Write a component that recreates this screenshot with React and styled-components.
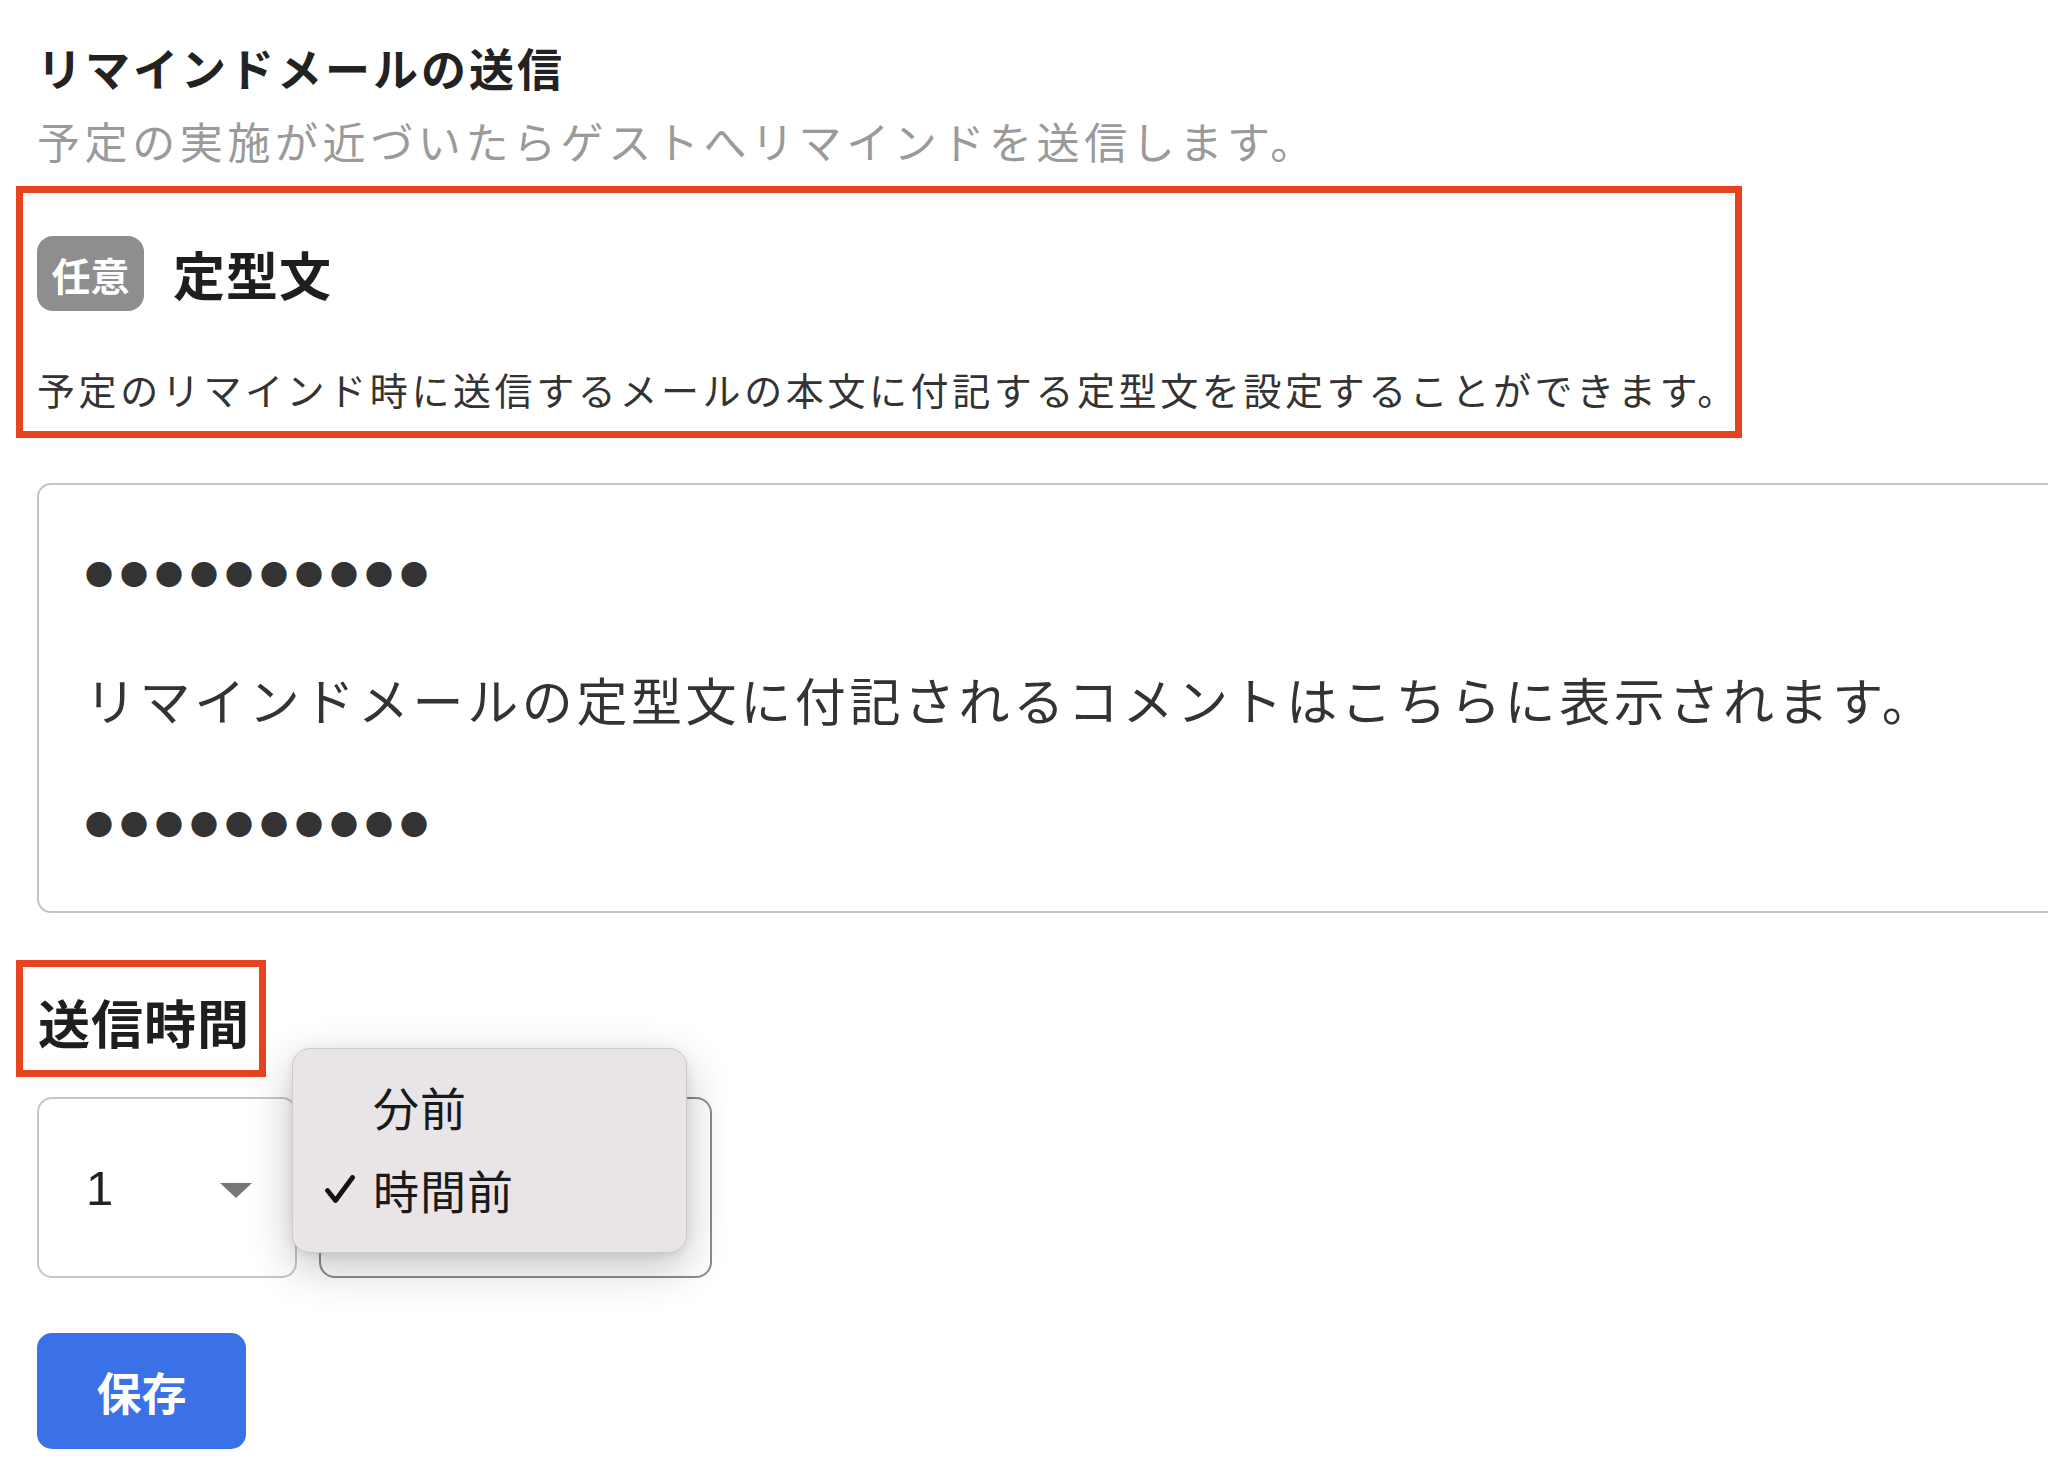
import styled, { createGlobalStyle } from "styled-components";

const GlobalStyle = createGlobalStyle`
  body {
    margin: 0;
    background: #fff;
    overflow: hidden;
    font-family: "Noto Sans CJK JP", "Noto Sans", sans-serif;
    color: #222;
  }
`;

const App = () => {
  return (
    <>
      <GlobalStyle />
      <Page>
        <Title>リマインドメールの送信</Title>
        <Lead>予定の実施が近づいたらゲストへリマインドを送信します。</Lead>

        <Highlight $pad="43px 14px 17px" $width="1726px">
          <FieldHead>
            <Badge>任意</Badge>
            <FieldName>定型文</FieldName>
          </FieldHead>
          <Help>
            予定のリマインド時に送信するメールの本文に付記する定型文を設定することができます。
          </Help>
        </Highlight>

        <Preview>
          <DotLine>●●●●●●●●●●</DotLine>
          <PreviewLine>
            リマインドメールの定型文に付記されるコメントはこちらに表示されます。
          </PreviewLine>
          <DotLine>●●●●●●●●●●</DotLine>
        </Preview>

        <Highlight $pad="12px 9px 5px 15px" $width="fit-content" $gap="47px">
          <SectionLabel>送信時間</SectionLabel>
        </Highlight>

        <SelectRow>
          <Select $width="260px">
            <Value>1</Value>
            <Caret viewBox="0 0 32 15">
              <polygon points="0,0 32,0 16,15" fill="#777" />
            </Caret>
          </Select>
          <Select $width="393px" $dark />

          <Menu>
            <MenuItem>
              <CheckCell />
              分前
            </MenuItem>
            <MenuItem>
              <CheckCell>
                <svg width="30" height="28" viewBox="0 0 30 28">
                  <path
                    d="M2.5 15.5 L10.5 25.5 L27.5 2.5"
                    fill="none"
                    stroke="#111"
                    strokeWidth="4.8"
                    strokeLinecap="round"
                    strokeLinejoin="round"
                  />
                </svg>
              </CheckCell>
              時間前
            </MenuItem>
          </Menu>
        </SelectRow>

        <SaveButton>保存</SaveButton>
      </Page>
    </>
  );
};

const Page = styled.main`
  padding: 38px 0 0 37px;
`;

const Title = styled.h1`
  margin: 0;
  font-size: 45px;
  line-height: 60px;
  font-weight: 700;
  letter-spacing: 3px;
  color: #222;
`;

const Lead = styled.p`
  margin: 12px 0 0;
  font-size: 43px;
  line-height: 60px;
  font-weight: 400;
  letter-spacing: 4.6px;
  color: #9a9a9a;
`;

const Highlight = styled.div`
  box-sizing: border-box;
  width: ${(p) => p.$width};
  margin: ${(p) => p.$gap || "16px"} 0 0 -21px;
  padding: ${(p) => p.$pad};
  border: 7px solid #e8421f;
`;

const FieldHead = styled.div`
  display: flex;
  align-items: center;
  gap: 29px;
  height: 75px;
`;

const Badge = styled.span`
  display: flex;
  align-items: center;
  justify-content: center;
  width: 107px;
  height: 75px;
  border-radius: 16px;
  background: #8e8e8e;
  color: #fff;
  font-size: 39px;
  font-weight: 700;
  letter-spacing: 0;
`;

const FieldName = styled.h2`
  margin: 0;
  font-size: 52px;
  line-height: 75px;
  font-weight: 700;
  letter-spacing: 1px;
  color: #1e1e1e;
`;

const Help = styled.p`
  margin: 53px 0 0;
  font-size: 38px;
  line-height: 50px;
  letter-spacing: 3.6px;
  color: #333;
  white-space: nowrap;
`;

const Preview = styled.div`
  box-sizing: border-box;
  width: 2100px;
  height: 430px;
  margin-top: 45px;
  padding: 26px 0 0 46px;
  border: 2px solid #c4c4c4;
  border-radius: 14px;
  color: #333;
`;

const PreviewLine = styled.div`
  height: 125px;
  display: flex;
  align-items: center;
  font-size: 51px;
  letter-spacing: 3.6px;
  white-space: nowrap;
`;

const DotLine = styled(PreviewLine)`
  font-size: 28px;
  letter-spacing: 7px;
`;

const SectionLabel = styled.h3`
  margin: 0;
  font-size: 52px;
  line-height: 86px;
  font-weight: 700;
  letter-spacing: 1px;
  color: #1e1e1e;
`;

const SelectRow = styled.div`
  position: relative;
  display: flex;
  gap: 22px;
  margin-top: 20px;
  height: 181px;
`;

const Select = styled.div`
  box-sizing: border-box;
  display: flex;
  align-items: center;
  width: ${(p) => p.$width};
  height: 100%;
  padding: 0 43px 0 47px;
  border: 2px solid ${(p) => (p.$dark ? "#8c8c8c" : "#c6c6c6")};
  border-radius: ${(p) => (p.$dark ? "16px" : "15px")};
  background: #fff;
`;

const Value = styled.span`
  font-family: "Liberation Sans", Arial, sans-serif;
  font-size: 49px;
  color: #222;
`;

const Caret = styled.svg`
  width: 32px;
  height: 15px;
  margin: 5px 0 0 auto;
`;

const Menu = styled.ul`
  position: absolute;
  left: 255px;
  top: -49px;
  box-sizing: border-box;
  width: 395px;
  height: 205px;
  margin: 0;
  padding: 15px 0 0;
  list-style: none;
  background: #e8e4e7;
  border: 1px solid #cdc9cc;
  border-radius: 18px;
  box-shadow: 0 14px 44px rgba(0, 0, 0, 0.24), 0 2px 8px rgba(0, 0, 0, 0.08);
`;

const MenuItem = styled.li`
  display: flex;
  align-items: center;
  height: 83px;
  font-size: 46px;
  letter-spacing: 1px;
  color: #1a1a1a;
`;

const CheckCell = styled.span`
  display: flex;
  align-items: center;
  width: 80px;
  padding-left: 32px;
  box-sizing: border-box;
`;

const SaveButton = styled.button`
  display: block;
  width: 209px;
  height: 116px;
  margin-top: 55px;
  border: none;
  border-radius: 15px;
  background: #3a71e6;
  color: #fff;
  font-family: "Noto Sans CJK JP", sans-serif;
  font-size: 45px;
  font-weight: 700;
  letter-spacing: 0;
`;

export default App;
